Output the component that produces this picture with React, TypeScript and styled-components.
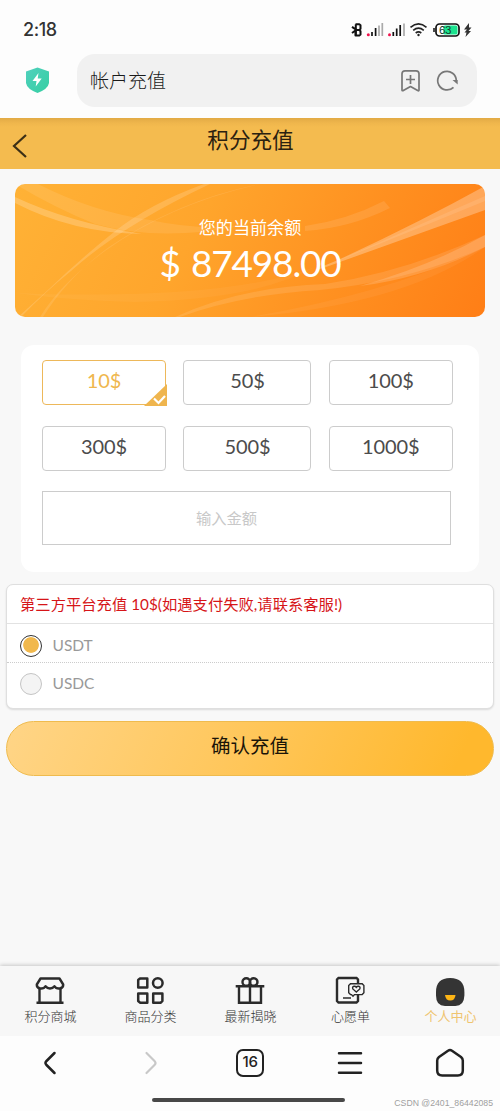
import React, { useState } from "react";
import styled, { createGlobalStyle } from "styled-components";

const GlobalStyle = createGlobalStyle`
  * { box-sizing: border-box; }
  body { margin: 0; background: #f8f8f8; }
  button, input { font: inherit; margin: 0; padding: 0; }
`;

const Screen = styled.div`
  width: 500px;
  height: 1111px;
  display: flex;
  flex-direction: column;
  overflow: hidden;
  background: #f8f8f8;
  font-family: Lato, "Noto Sans CJK SC", sans-serif;
  color: #222;
`;

const StatusBar = styled.div`
  height: 54px;
  flex: none;
  display: flex;
  align-items: center;
  justify-content: space-between;
  padding: 6px 26px 0 23px;
  background: #fdfdfd;
`;

const Clock = styled.span`
  font: 500 18px/24px Inter, sans-serif;
  letter-spacing: -0.4px;
  color: #333;
`;

const AddressRow = styled.div`
  height: 64px;
  flex: none;
  display: flex;
  align-items: flex-start;
  background: #fdfdfd;
  padding: 0 23px 0 25px;
  gap: 39px;
`;

const Shield = styled.svg`
  width: 24px;
  height: 28px;
  margin-top: 12px;
  margin-right: 3px;
  flex: none;
`;

const AddressField = styled.div`
  flex: 1;
  height: 53px;
  margin-left: -14px;
  border-radius: 18px;
  background: #f1f1f1;
  display: flex;
  align-items: center;
  padding: 0 18px 0 13px;
`;

const AddressText = styled.span`
  flex: 1;
  font-size: 19px;
  font-weight: 300;
  line-height: 26px;
  color: #1a1a1a;
`;

const FieldIcons = styled.svg`
  width: 60px;
  height: 26px;
`;

const Header = styled.header`
  height: 51px;
  flex: none;
  display: grid;
  grid-template-columns: 40px 1fr 40px;
  background: linear-gradient(#e2aa45 0, #efb64c 5px, #f4bb4f 9px);
`;

const BackIcon = styled.svg`
  width: 16px;
  height: 26px;
  margin: 15px 0 0 12px;
`;

const Title = styled.h1`
  margin: 6px 0 0 1px;
  font-size: 21.6px;
  font-weight: 400;
  line-height: 32px;
  text-align: center;
  color: #2b2110;
`;

const Main = styled.main`
  flex: 1;
  padding: 15px 6px 0;
  display: flex;
  flex-direction: column;
`;

const BalanceCard = styled.section`
  height: 133px;
  margin: 0 9px;
  border-radius: 10px;
  overflow: hidden;
  display: grid;
  background: linear-gradient(117deg, #ffb236 0%, #ffa52c 38%, #ff9020 70%, #ff7e16 100%);
  > * { grid-area: 1 / 1; }
`;

const BalanceContent = styled.div`
  display: flex;
  flex-direction: column;
  align-items: center;
  z-index: 1;
  color: #fff;
  padding-top: 31px;
`;

const BalanceLabel = styled.span`
  font-size: 17.1px;
  line-height: 26px;
`;

const BalanceValue = styled.span`
  font-family: Lato, sans-serif;
  font-size: 37px;
  line-height: 43px;
  letter-spacing: -1.2px;
  word-spacing: 3px;
`;

const AmountPanel = styled.section`
  height: 227px;
  margin: 28px 9px 0 15px;
  width: 458px;
  border-radius: 13px;
  background: #fff;
  padding: 15px 26px 0 21px;
`;

const AmountGrid = styled.div`
  display: grid;
  grid-template-columns: 124px 128px 124px;
  grid-auto-rows: 45px;
  column-gap: 17.4px;
  row-gap: 21px;
`;

const AmountButton = styled.button<{ $active: boolean }>`
  border: 1px solid ${(p) => (p.$active ? "#edb85a" : "#ccc")};
  border-radius: 4px;
  background: #fff;
  color: ${(p) => (p.$active ? "#efb74e" : "#4c4c4c")};
  font-size: 20px;
  line-height: 24px;
  padding-bottom: 6px;
  letter-spacing: -0.1px;
  position: relative;
`;

const CheckCorner = styled.svg`
  position: absolute;
  right: -2px;
  bottom: -2px;
  width: 23px;
  height: 22px;
`;

const AmountInput = styled.input`
  display: block;
  width: 409px;
  height: 54px;
  margin-top: 20px;
  border: 1px solid #ccc;
  outline: none;
  text-align: center;
  padding-right: 40px;
  padding-bottom: 1px;
  font-size: 15.3px;
  color: #333;
  &::placeholder { color: #c8c8c8; opacity: 1; }
`;

const PaymentBox = styled.section`
  height: 125px;
  margin-top: 12px;
  border: 1px solid #dfdfdf;
  border-radius: 7px;
  background: #fff;
  box-shadow: 0 1px 2px rgba(0, 0, 0, 0.12);
`;

const PaymentTitle = styled.div`
  height: 39px;
  padding: 0 13px;
  border-bottom: 1px solid #e2e2e2;
  color: #d61518;
  font-size: 15.3px;
  line-height: 38px;
  letter-spacing: 0.02px;
  white-space: nowrap;
`;

const PaymentOption = styled.label<{ $divided?: boolean }>`
  height: 39px;
  display: flex;
  align-items: center;
  gap: 10.5px;
  padding: ${(p) => (p.$divided ? "5px" : "2px")} 13px 0;
  border-bottom: ${(p) => (p.$divided ? "1px dotted #ccc" : "none")};
  color: #999;
  font-size: 15.5px;
`;

const OptionName = styled.span`
  line-height: 20px;
  padding-bottom: 2px;
`;

const Radio = styled.span<{ $checked: boolean }>`
  width: 22px;
  height: 22px;
  border-radius: 50%;
  border: 1px solid ${(p) => (p.$checked ? "#333" : "#c4c4c4")};
  background: ${(p) =>
    p.$checked ? "radial-gradient(circle at 50% 45%, #f1b84c 7.4px, #fff 8.2px)" : "#f4f4f4"};
`;

const ConfirmButton = styled.button`
  height: 55px;
  margin-top: 12px;
  border: 1px solid #efbb4e;
  border-radius: 28px;
  background: linear-gradient(115deg, #ffd587 0%, #ffc659 50%, #ffb82d 92%);
  color: #1a1408;
  font-size: 19.5px;
  line-height: 28px;
  padding-bottom: 5px;
`;

const TabBar = styled.nav`
  height: 70px;
  flex: none;
  display: grid;
  grid-template-columns: repeat(5, 1fr);
  background: #f7f7f7;
  box-shadow: 0 -1px 4px rgba(0, 0, 0, 0.2);
`;

const Tab = styled.a<{ $active?: boolean }>`
  display: flex;
  flex-direction: column;
  align-items: center;
  padding-top: 8px;
  font-size: 13px;
  font-weight: ${(p) => (p.$active ? 400 : 300)};
  line-height: 20px;
  color: ${(p) => (p.$active ? "#efc46f" : "#333")};
`;

const TabIcon = styled.svg`
  width: 32px;
  height: 32px;
  flex: none;
`;

const TabLabel = styled.span`
  padding-left: 1px;
`;

const BrowserBar = styled.footer`
  height: 75px;
  flex: none;
  background: #fdfdfd;
  display: flex;
  flex-direction: column;
`;

const BrowserActions = styled.div`
  height: 54px;
  display: grid;
  grid-template-columns: repeat(5, 1fr);
  place-items: center;
`;

const ActionIcon = styled.svg`
  width: 32px;
  height: 32px;
`;

const TabCount = styled.span`
  width: 28px;
  height: 28px;
  border: 2.4px solid #222;
  border-radius: 7px;
  text-align: center;
  font: 500 15px/22px Inter, sans-serif;
  letter-spacing: -0.4px;
  color: #222;
`;

const GestureRow = styled.div`
  display: grid;
  grid-template-columns: 152px 193px 1fr;
  align-items: center;
  height: 21px;
`;

const GesturePill = styled.span`
  grid-column: 2;
  height: 4px;
  border-radius: 2px;
  background: #484848;
  margin-bottom: 1px;
`;

const Watermark = styled.span`
  font: 8.7px/12px "Liberation Sans", sans-serif;
  color: #a0a0a0;
  text-align: right;
  padding: 4px 7px 0 0;
  white-space: nowrap;
`;

const StatusIcons = () => (
  <svg width="124" height="18" viewBox="350 21 124 18" fill="none">
    <g stroke="#111" strokeWidth="2" strokeLinejoin="round">
      <path d="M352 26.800l4.500 3-4.500 3.200M355.500 24.300h3.800l1.200 1v3.400l-1.200 1.200h-3.600M355.700 30h3.600l1.200 1.200v3.300l-1.200 1h-3.800z" />
      <path d="M355.800 24.300v11" />
    </g>
    <circle cx="368.300" cy="34.700" r="1.500" fill="#f0134d" />
    <circle cx="389.500" cy="34.700" r="1.500" fill="#f0134d" />
    <g strokeWidth="1.700">
      <path d="M372 36v-4M375.600 36v-8" stroke="#111" />
      <path d="M379 36V25.500M382.300 36V23" stroke="#aaa" />
      <path d="M393.300 36v-4M396.700 36v-7.500M400.200 36V25" stroke="#111" />
      <path d="M404 36V23.500" stroke="#aaa" />
    </g>
    <path d="M410.500 27.300q8-7 16 0M413.200 30.300q5.300-4.400 10.600 0M415.700 33q2.800-2.200 5.600 0" stroke="#222" strokeWidth="1.600" />
    <circle cx="418.500" cy="35" r="1.200" fill="#222" />
    <rect x="436" y="24" width="23" height="12" rx="3.500" stroke="#111" strokeWidth="1.700" fill="#fff" />
    <path d="M434 28v4" stroke="#111" strokeWidth="1.500" />
    <rect x="443.500" y="25.500" width="14" height="9" rx="1.500" fill="#1be38e" />
    <text x="439" y="33.900" fontSize="10.500" fontFamily="Inter, sans-serif" fill="#15382a" textLength="12.500">63</text>
    <path d="M469 23l-5 6.500h3l-2.500 3h2l-1 4.500 5.500-6h-2.500l3-3.500h-2.500z" fill="#333" />
  </svg>
);

const BalanceWaves = () => (
  <svg width="470" height="133" viewBox="15 184 470 133" fill="#fff">
    <path d="M15 203q58 30 127 31Q68 222 15 197z" fillOpacity=".2" />
    <path d="M15 184h23q55 28 112 36 45 10 90 6-80 16-145-2Q55 208 15 184z" fillOpacity=".09" />
    <path d="M204 184q-55 20-90 48T48 290l-30 27h3q24-25 50-46 50-45 139-87z" fillOpacity=".16" />
    <path d="M260 184q-90 20-155 67-45 33-65 66h3q25-40 66-70 70-47 151-63z" fillOpacity=".1" />
    <path d="M305 226q42-6 79-25l6 7q-40 20-85 23z" fillOpacity=".1" />
    <path d="M485 186v24L326 267q-25 8 12-7 80-37 147-74z" fillOpacity=".28" />
    <path d="M485 196v5L330 264z" fillOpacity=".1" />
    <path d="M485 235v12q-75 34-165 43-80 5-140 27h-5q65-30 150-33 80-12 160-49z" fillOpacity=".11" />
    <path d="M485 235v12q-60 31-125 39 70-20 125-51z" fillOpacity=".16" />
    <path d="M15 293q210 8 300-26-60 33-180 35-60-1-120-9z" fillOpacity=".04" />
    <path d="M485 247q-80 57-235 70 140-24 235-70z" fillOpacity=".05" />
  </svg>
);

const line = { fill: "none", stroke: "#2b2b2b", strokeWidth: 2.4 } as const;

const ShopIcon = () => (
  <TabIcon viewBox="0 0 32 32">
    <g {...line} strokeLinejoin="round">
      <path d="M6 14.500Q2.500 13.500 2.800 10.500L6.500 4.500h19l3.700 6q.3 3-3.200 4-4 .5-5.500-2.300-1.500 2.300-4.500 2.300t-4.500-2.300Q10 15 6 14.500z" />
      <path d="M5.500 14.500v14M26.500 14.500v14M2.500 28.800h27" />
    </g>
  </TabIcon>
);

const CategoryIcon = () => (
  <TabIcon viewBox="0 0 32 32">
    <g {...line} strokeWidth={2.5}>
      <path d="M6 4.500h7.300v9H4.200V6z" strokeLinejoin="round" />
      <circle cx="23.800" cy="9" r="4.800" />
      <path d="M4.200 19.500h9.100v9.200H6L4.200 27zM19.200 19.500h9.200v7.500l-1.600 1.700h-7.600z" strokeLinejoin="round" />
    </g>
  </TabIcon>
);

const GiftIcon = () => (
  <TabIcon viewBox="0 0 32 32">
    <g {...line}>
      <path d="M1.700 12.200h28.600M5 12.200v16.600h22V12.200M16 7.500v21.300" />
      <circle cx="12.300" cy="8" r="3.800" />
      <circle cx="19.700" cy="8" r="3.800" />
    </g>
  </TabIcon>
);

const WishIcon = () => (
  <TabIcon viewBox="0 0 32 32">
    <g {...line}>
      <path d="M24 9V5.500l-1.500-1.500H4.500L3 5.500v21.500l1.500 1.500h18l1.500-1.500V21" />
      <path d="M9 24h8" strokeWidth="1.500" />
      <path d="M16.500 9.700h11.700l1.700 1.800v7.300l-1.700 1.800H20.500l-1.500 1.700-1.500-1.700h-1l-1.800-1.800v-7.300z" fill="#f7f7f7" strokeWidth="1.400" />
      <path d="M22.300 18l-3.500-3.100q-.8-2.200 1.200-2.600 1.500-.2 2.300 1 .8-1.200 2.300-1 2 .4 1.200 2.600z" strokeWidth="1.400" />
    </g>
  </TabIcon>
);

const ProfileIcon = () => (
  <TabIcon viewBox="0 0 32 32">
    <path d="M2 18Q2 4 16.200 4T30.400 18v3.500q-.4 10.500-9 10.500H11Q2 32 2 21.500z" fill="#343434" />
    <path d="M11 21h10.500q-.5 5.500-5.200 5.500T11 21z" fill="#fdb515" />
  </TabIcon>
);

const tabs = [
  { label: "积分商城", Icon: ShopIcon },
  { label: "商品分类", Icon: CategoryIcon },
  { label: "最新揭晓", Icon: GiftIcon },
  { label: "心愿单", Icon: WishIcon },
  { label: "个人中心", Icon: ProfileIcon },
];

const amounts = [10, 50, 100, 300, 500, 1000];
const coins = ["USDT", "USDC"];

export default function App() {
  const [amount, setAmount] = useState(10);
  const [coin, setCoin] = useState("USDT");

  return (
    <Screen>
      <GlobalStyle />
      <StatusBar>
        <Clock>2:18</Clock>
        <StatusIcons />
      </StatusBar>
      <AddressRow>
        <Shield viewBox="0 0 24 28">
          <defs>
            <linearGradient id="shield" x1="0" y1="0" x2="1" y2="1">
              <stop offset="0" stopColor="#50d0bd" />
              <stop offset="1" stopColor="#35cfa2" />
            </linearGradient>
          </defs>
          <path d="M12.500 1.500L24 5.500V17q-1 6-11.500 10Q2 23 1 17V5.500z" fill="url(#shield)" />
          <path d="M13.500 7L7.500 15h4l-.8 5.500 6-8h-4z" fill="#fff" />
        </Shield>
        <AddressField>
          <AddressText>帐户充值</AddressText>
          <FieldIcons viewBox="0 0 60 26" fill="none" stroke="#777" strokeWidth="1.700">
            <path d="M6 2.800h11q3 0 3 3V22q0 1.200-1.300.6L11.500 18.500l-7.200 4.100Q3 23 3 22V5.800q0-3 3-3zM11.500 7v9M7 11.500h9" strokeLinejoin="round" />
            <path d="M54.500 19.300A9.300 9.300 0 1 1 57.300 12.500" />
            <path d="M53.500 12h5.200v4.500z" fill="#777" stroke="none" />
          </FieldIcons>
        </AddressField>
      </AddressRow>
      <Header>
        <BackIcon viewBox="0 0 16 26" fill="none" stroke="#3c2f16" strokeWidth="2.200">
          <path d="M14 2L2 13l12 11" />
        </BackIcon>
        <Title>积分充值</Title>
      </Header>
      <Main>
        <BalanceCard>
          <BalanceWaves />
          <BalanceContent>
            <BalanceLabel>您的当前余额</BalanceLabel>
            <BalanceValue>$ 87498.00</BalanceValue>
          </BalanceContent>
        </BalanceCard>
        <AmountPanel>
          <AmountGrid>
            {amounts.map((value) => (
              <AmountButton key={value} $active={value === amount} onClick={() => setAmount(value)}>
                {value}$
                {value === amount && (
                  <CheckCorner viewBox="0 0 23 22">
                    <path d="M23 0v22H0z" fill="#efb54e" />
                    <path d="M10 14.500l4.500 4.500 6.500-7" fill="none" stroke="#fff" strokeWidth="2.200" />
                  </CheckCorner>
                )}
              </AmountButton>
            ))}
          </AmountGrid>
          <AmountInput placeholder="输入金额" />
        </AmountPanel>
        <PaymentBox>
          <PaymentTitle>第三方平台充值 {amount}$(如遇支付失败,请联系客服!)</PaymentTitle>
          {coins.map((name, i) => (
            <PaymentOption key={name} $divided={i === 0} onClick={() => setCoin(name)}>
              <Radio $checked={name === coin} />
              <OptionName>{name}</OptionName>
            </PaymentOption>
          ))}
        </PaymentBox>
        <ConfirmButton>确认充值</ConfirmButton>
      </Main>
      <TabBar>
        {tabs.map(({ label, Icon }, i) => (
          <Tab key={label} $active={i === 4}>
            <Icon />
            <TabLabel>{label}</TabLabel>
          </Tab>
        ))}
      </TabBar>
      <BrowserBar>
        <BrowserActions>
          <ActionIcon viewBox="0 0 32 32" fill="none" stroke="#222" strokeWidth="2.500" strokeLinecap="round">
            <path d="M20.500 6l-8 8q-2 2 0 4l8 8" />
          </ActionIcon>
          <ActionIcon viewBox="0 0 32 32" fill="none" stroke="#c8c8c8" strokeWidth="2.200" strokeLinecap="round">
            <path d="M12.500 6l8 8q2 2 0 4l-8 8" />
          </ActionIcon>
          <TabCount>16</TabCount>
          <ActionIcon viewBox="0 0 32 32" fill="none" stroke="#222" strokeWidth="2.500" strokeLinecap="round">
            <path d="M5 6.200h22M5 16h22M5 25.700h22" />
          </ActionIcon>
          <ActionIcon viewBox="0 0 32 32" fill="none" stroke="#222" strokeWidth="2.500" strokeLinejoin="round">
            <path d="M14 3.700q2-1.200 4 0l9 6.300q1.800 1.500 1.800 3.500v10q0 5-5 5H8.200q-5 0-5-5v-10q0-2 1.800-3.500z" />
          </ActionIcon>
        </BrowserActions>
        <GestureRow>
          <GesturePill />
          <Watermark>CSDN @2401_86442085</Watermark>
        </GestureRow>
      </BrowserBar>
    </Screen>
  );
}
